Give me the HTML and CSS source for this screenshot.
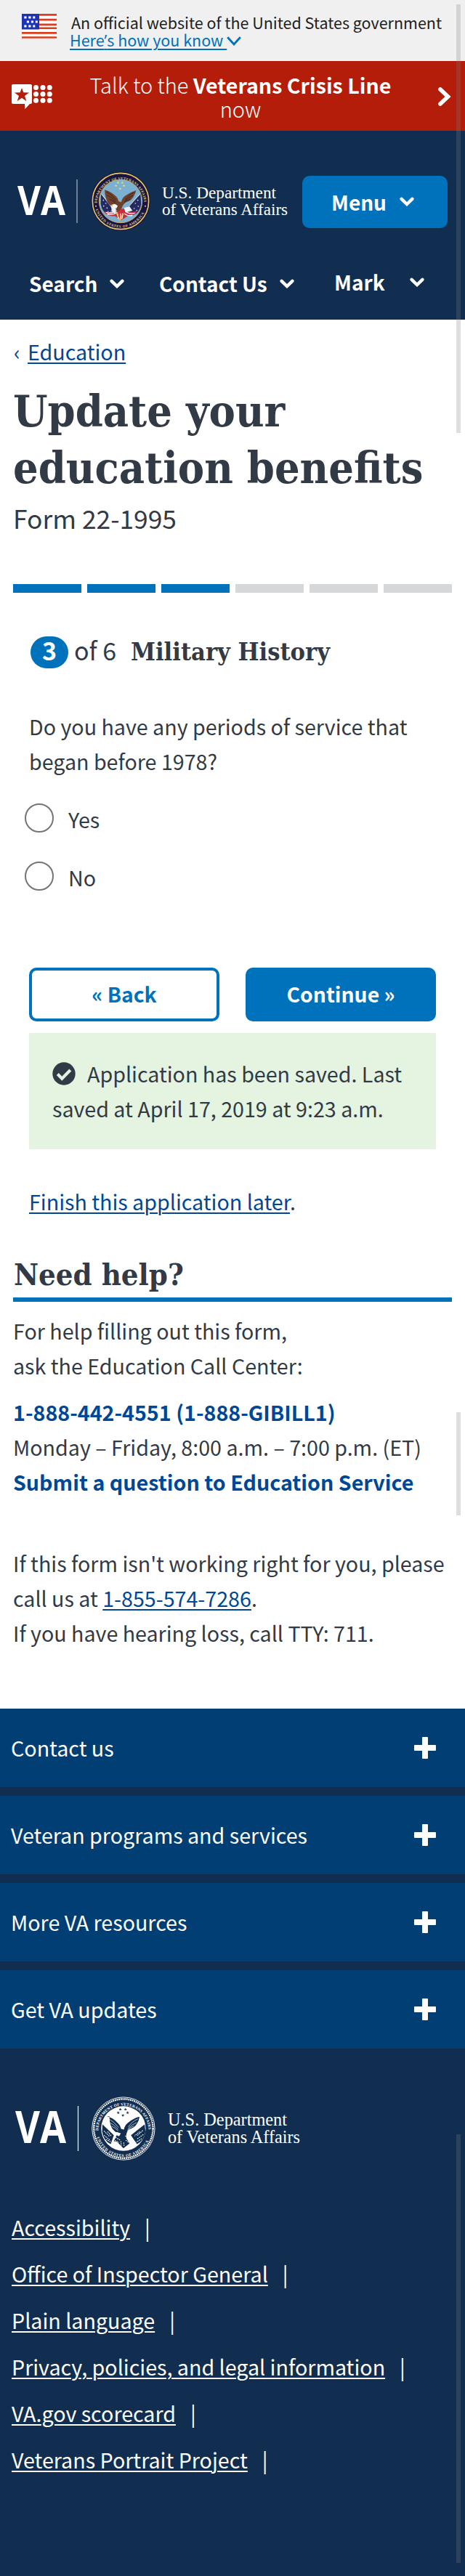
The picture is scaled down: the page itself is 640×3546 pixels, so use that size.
FILE: index.html
```html
<!DOCTYPE html>
<html lang="en">
<head>
<meta charset="utf-8">
<title>Update your education benefits</title>
<link rel="stylesheet" href="styles.css">
</head>
<body>
<svg class="defs" width="0" height="0" aria-hidden="true">
  <defs>
    <symbol id="chev" viewBox="0 0 20 13"><path d="M2.6 2.8 10 10 17.4 2.8" fill="none" stroke="#fff" stroke-width="4.4" stroke-linecap="round"/></symbol>
    <symbol id="plus" viewBox="0 0 30 30"><path d="M12 0h6q1 0 1 1v10h10q1 0 1 1v6q0 1-1 1H19v10q0 1-1 1h-6q-1 0-1-1V19H1q-1 0-1-1v-6q0-1 1-1h10V1q0-1 1-1z" fill="#fff"/></symbol>
    <path id="star" d="M0-6 1.6-1.9 6-1.9 2.5.8 3.8 5 0 2.5-3.8 5-2.5.8-6-1.9-1.6-1.9z"/>
    <path id="arc-top" d="M56 164A97 97 0 1 1 250 164"/>
    <path id="arc-bottom" d="M50 190A108 108 0 0 0 256 190"/>
  </defs>
</svg>

<div class="gov">
  <svg class="flag" width="48" height="34" viewBox="0 0 48 34">
    <path fill="#fff" d="M0 0h48v34H0z"/>
    <path stroke="#db3e1f" stroke-width="2.7" d="M0 1.4h48M0 8.2h48M0 14.9h48M0 19.9h48M0 26.3h48M0 32.5h48"/>
    <path fill="#fff" d="M24 21.3h24v1.6H0v-1.6z"/>
    <path fill="#1e33b1" d="M0 0h24v21.5H0z"/>
    <path stroke="#fff" stroke-width="3" stroke-dasharray="3.2 2.8" d="M3.3 5h15M6.8 11h15M3.3 17h15"/>
  </svg>
  <div class="gov-text">
    <div>An official website of the United States government</div>
    <div class="gov-more"><a>Here<span class="apos">’</span>s how you know&nbsp;</a><svg width="20" height="13" viewBox="0 0 20 13"><path d="M1.2 1.2 10 11 18.8 1.2" fill="none" stroke="#0071bb" stroke-width="2.8"/></svg></div>
  </div>
</div>

<div class="crisis">
  <svg class="crisis-icon" width="56" height="34" viewBox="0 0 56 34" fill="#fff">
    <path d="M2 0h24q2 0 2 2v23q0 2-2 2h-1l-6.500 7-.5-7H2q-2 0-2-2V2q0-2 2-2z"/>
    <path fill="#b31d09" d="m14 5 2.300 6.200 7.700.3-6 4.500 2.300 7.200L14 18.800l-6.300 4.400L10 16 4 11.500l7.700-.3z"/>
    <g><circle cx="33.500" cy="4.500" r="3.500"/><circle cx="43" cy="4.500" r="3.500"/><circle cx="52.300" cy="4.500" r="3.500"/><circle cx="33.500" cy="13.500" r="3.500"/><circle cx="43" cy="13.500" r="3.500"/><circle cx="52.300" cy="13.500" r="3.500"/><circle cx="33.500" cy="22.300" r="3.500"/><circle cx="43" cy="22.300" r="3.500"/><circle cx="52.300" cy="22.300" r="3.500"/></g>
  </svg>
  <div class="crisis-text"><span class="light">Talk to the</span> <b>Veterans Crisis Line</b><br><span class="light">now</span></div>
  <svg class="crisis-go" width="18" height="26" viewBox="0 0 18 26"><path d="M3 3 13.500 13 3 23" fill="none" stroke="#fff" stroke-width="5.600" stroke-linecap="round"/></svg>
</div>

<header class="top">
  <div class="top-row">
    <svg width="400" height="96" viewBox="0 230 400 96">
      <text class="va" x="24" y="296" font-size="56" textLength="66" lengthAdjust="spacingAndGlyphs">VA</text>
      <path d="M106 247v60" stroke="#8d9bb0" stroke-width="1.500"/>
      <g transform="translate(115 225) scale(.3333)">
        <circle cx="153" cy="156" r="122" fill="#191440"/>
        <circle cx="153" cy="156" r="116" fill="none" stroke="#e5c664" stroke-width="5"/>
        <circle cx="153" cy="156" r="89" fill="#7cb0d3" stroke="#c9ad5e" stroke-width="3"/>
        <g class="seal-text" fill="#e0d08c">
          <text><textPath href="#arc-top" textLength="300">DEPARTMENT OF VETERANS AFFAIRS</textPath></text>
          <text><textPath href="#arc-bottom" textLength="258">UNITED STATES OF AMERICA</textPath></text>
        </g>
        <circle cx="51" cy="176" r="3" fill="#e0d08c"/><circle cx="255" cy="176" r="3" fill="#e0d08c"/>
        <g fill="#f0dc59"><use href="#star" x="142" y="79"/><use href="#star" x="160" y="79"/><use href="#star" x="134" y="92"/><use href="#star" x="167" y="92"/><use href="#star" x="151" y="104"/></g>
        <path d="M72 127 118 186 104 214Q76 202 71 168z" fill="#252a62"/>
        <path d="M235 127 178 186 205 214Q233 202 238 168z" fill="#252a62"/>
        <path d="M74 126 125 188M232 126 180 186" stroke="#e8dfc0" stroke-width="3"/>
        <g fill="#e9e9f4"><circle cx="82" cy="152" r="2.500"/><circle cx="92" cy="165" r="2.500"/><circle cx="83" cy="176" r="2.500"/><circle cx="97" cy="184" r="2.500"/><circle cx="101" cy="199" r="2.500"/><circle cx="224" cy="152" r="2.500"/><circle cx="214" cy="165" r="2.500"/><circle cx="226" cy="177" r="2.500"/><circle cx="209" cy="186" r="2.500"/><circle cx="220" cy="194" r="2.500"/></g>
        <path d="M83 199q30 6 55-10l30-2q20 20 53 9-8 22-36 19l-29 20-28-18q-30 3-45-18z" fill="#c82d40"/>
        <path d="M92 202q24 8 45-7M98 210q22 4 42-8M172 197q18 14 40 8M168 207q16 12 34 7M140 207l4 22M152 206v27M163 206l-5 24" fill="none" stroke="#fff" stroke-width="4"/>
        <path d="M112 174 134 184 132 207 119 201zM167 183 190 178 202 195 173 202z" fill="#eef3f8"/>
        <path d="M87 109q24 6 47 27 8 7 11 21l11 3q2-16 15-26 21-15 46-23-2 13-11 27-9 16-29 21-14 8-20 27l-18 15-9-23q-24-3-31-18-10-17-12-51z" fill="#70422c"/>
        <path d="M94 117q25 12 40 34M98 131q20 8 35 28M107 147q14 6 26 18M211 119q-27 11-39 31M204 132q-22 9-34 25M194 146q-15 5-26 17" fill="none" stroke="#3c241d" stroke-width="3"/>
        <path d="m115 171 14-4 12 8-5 10-12-4z" fill="#fff"/><path d="m112 173 8-2-4 7z" fill="#f0c443"/>
        <path d="m135 203 15 31 12-26" fill="none" stroke="#e9bf51" stroke-width="4"/>
      </g>
      <text class="dept" x="223" y="273" font-size="23.500" textLength="157" lengthAdjust="spacingAndGlyphs">U.S. Department</text>
      <text class="dept" x="223" y="296" font-size="23.500" textLength="173" lengthAdjust="spacingAndGlyphs">of Veterans Affairs</text>
    </svg>
    <div class="menu">Menu<svg width="20" height="13"><use href="#chev"/></svg></div>
  </div>
  <nav class="nav">
    <div class="n1">Search<svg width="20" height="13"><use href="#chev"/></svg></div>
    <div class="n2">Contact Us<svg width="20" height="13"><use href="#chev"/></svg></div>
    <div class="n3">Mark<svg width="20" height="13"><use href="#chev"/></svg></div>
  </nav>
</header>

<main>
  <div class="crumb"><span>‹</span><a>Education</a></div>
  <h1>Update your<br>education benefits</h1>
  <div class="form-no">Form 22-1995</div>
  <div class="progress"><i class="on"></i><i class="on"></i><i class="on"></i><i></i><i></i><i></i></div>
  <section class="step">
    <div class="step-head"><span class="badge">3</span><span class="of">of 6</span><h2>Military History</h2></div>
    <p class="question">Do you have any periods of service that<br>began before 1978?</p>
    <label class="radio"><i></i>Yes</label>
    <label class="radio"><i></i>No</label>
    <div class="buttons"><div class="btn back">« Back</div><div class="btn">Continue »</div></div>
    <div class="alert"><svg width="32" height="32" viewBox="0 0 32 32"><circle cx="16" cy="16" r="15.700" fill="#323a45"/><path d="m7.300 16.500 6 6.200L24.800 11" fill="none" stroke="#e5f3e1" stroke-width="4.200"/></svg>Application has been saved. Last<br>saved at April 17, 2019 at 9:23 a.m.</div>
    <p class="finish"><a>Finish this application later</a>.</p>
  </section>
  <section class="help">
    <h2>Need help?</h2>
    <p class="p1">For help filling out this form,<br>ask the Education Call Center:</p>
    <p class="p2"><b>1-888-442-4551 (1-888-GIBILL1)</b><br>Monday – Friday, 8:00 a.m. – 7:00 p.m. (ET)<br><b>Submit a question to Education Service</b></p>
    <p class="p3">If this form isn't working right for you, please<br>call us at <a>1-855-574-7286</a>.<br>If you have hearing loss, call TTY: 711.</p>
  </section>
</main>

<footer>
  <div class="rows">
    <div class="row">Contact us<svg width="30" height="30"><use href="#plus"/></svg></div>
    <div class="row">Veteran programs and services<svg width="30" height="30"><use href="#plus"/></svg></div>
    <div class="row">More VA resources<svg width="30" height="30"><use href="#plus"/></svg></div>
    <div class="row">Get VA updates<svg width="30" height="30"><use href="#plus"/></svg></div>
  </div>
  <svg class="foot-logo" width="430" height="96" viewBox="0 2882 430 96">
    <text class="va" x="21" y="2950" font-size="60" textLength="70" lengthAdjust="spacingAndGlyphs">VA</text>
    <path d="M107.500 2899v62" stroke="#e3e7ec" stroke-width="1.300"/>
    <g transform="translate(115.300 2874.400) scale(.3567)">
      <circle cx="153" cy="156" r="121" fill="none" stroke="#fff" stroke-width="2.500"/>
      <circle cx="153" cy="156" r="114" fill="none" stroke="#fff" stroke-width="7" stroke-dasharray="5 2.500"/>
      <circle cx="153" cy="156" r="86" fill="#fff"/>
      <g class="seal-text" fill="#fff">
        <text><textPath href="#arc-top" textLength="300">DEPARTMENT OF VETERANS AFFAIRS</textPath></text>
        <text><textPath href="#arc-bottom" textLength="258">UNITED STATES OF AMERICA</textPath></text>
      </g>
      <g fill="#112e51">
        <use href="#star" x="141" y="82"/><use href="#star" x="161" y="82"/><use href="#star" x="133" y="95"/><use href="#star" x="169" y="95"/><use href="#star" x="151" y="105"/>
        <path d="M72 140 116 182 104 216Q76 204 71 168z"/><path d="M235 140 182 182 205 216Q233 204 238 168z"/>
        <path d="M89 109q22 4 44 27 8 7 11 21l11 3q2-16 15-26 21-18 45-24-1 13-10 28-9 16-29 21-14 8-12 34l13 20-24 19-24-24-13-3 15-32q-17-6-22-18-10-17-10-46z"/>
      </g>
      <path d="M96 118q22 12 38 34M98 132q18 8 35 27M107 147q14 6 26 18M209 119q-25 11-37 31M204 133q-20 8-34 24M194 146q-15 5-26 17" fill="none" stroke="#fff" stroke-width="1.800"/>
      <path d="M78 130 128 180M228 130 180 174" stroke="#fff" stroke-width="7"/>
      <path d="M78 165l22 22M78 182l22 18M92 168l15 18M85 198l20 10M228 163l-22 21M230 179l-25 18M216 168l-20 17M224 195l-22 14M122 190l18 10M120 202l16 8M160 184l22 19M162 201l18 13M143 205l2 18M154 210l2 16" stroke="#fff" stroke-width="3" stroke-dasharray="5 3"/>
      <path d="m114 176 13-7 16 6-7 11-10-5z" fill="#fff"/>
    </g>
    <text class="dept" x="231" y="2926" font-size="24.500" textLength="164" lengthAdjust="spacingAndGlyphs">U.S. Department</text>
    <text class="dept" x="231" y="2950" font-size="24.500" textLength="182" lengthAdjust="spacingAndGlyphs">of Veterans Affairs</text>
  </svg>
  <ul class="links">
    <li><a>Accessibility</a><span>|</span></li>
    <li><a>Office of Inspector General</a><span>|</span></li>
    <li><a>Plain language</a><span>|</span></li>
    <li><a>Privacy, policies, and legal information</a><span>|</span></li>
    <li><a>VA.gov scorecard</a><span>|</span></li>
    <li><a>Veterans Portrait Project</a><span>|</span></li>
  </ul>
</footer>
<div class="thumb t1"></div><div class="thumb t2"></div><div class="thumb t3"></div>
</body>
</html>
```
FILE: styles.css
```css
* { box-sizing: border-box; }
body {
  position: relative;
  margin: 0;
  width: 640px;
  height: 3546px;
  background: #fff;
  color: #323a45;
  font: 400 28.65px/48px "Noto Sans CJK SC", "Noto Sans", sans-serif;
  white-space: nowrap;
}
svg { display: block; flex: none; }
.defs { position: absolute; }
p, h1, h2, ul { margin: 0; padding: 0; }
a { text-decoration: underline; text-decoration-thickness: 2px; text-underline-offset: 3px; color: #004795; }

/* government banner */
.gov { display: flex; height: 84px; padding: 19px 0 0 30px; background: #f0f0f0; color: #212121; font-size: 21.5px; line-height: 24px; }
.gov-text { margin-left: 20px; }
.gov-more { display: flex; margin-left: -2px; }
.gov-more a { color: #0071bb; }
.gov-more svg { margin-top: 7px; }
.apos { font-family: "Open Sans", sans-serif; }

/* crisis line */
.crisis { display: flex; height: 96px; padding: 16px 0 0 16px; background: #b31d09; color: #fff; font-size: 28.6px; line-height: 32px; }
.crisis-icon { margin-top: 16px; }
.crisis-text { width: 518px; text-align: center; }
.crisis .light { font-size: 29px; font-weight: 300; }
.crisis-go { margin: 20px 0 0 13px; }

/* header */
.top { height: 260px; padding-top: 50px; background: #112e51; color: #fff; font-size: 28px; font-weight: 700; }
.top-row { display: flex; align-items: center; height: 96px; }
.va { font-family: "Open Sans", sans-serif; font-weight: 700; fill: #fff; }
.dept { font-family: "Liberation Serif", serif; font-weight: 400; fill: #fff; }
.seal-text { font: 700 15px "Liberation Serif", serif; }
.menu { display: flex; width: 200px; height: 72px; margin-left: 16px; padding: 12px 0 0 40px; border-radius: 10px; background: #0071bb; line-height: 48px; }
.menu svg { margin: 17px 0 0 18px; }
.nav { display: flex; padding: 40px 0 0 40px; }
.nav div { display: flex; line-height: 48px; }
.nav svg { margin: 18px 0 0 17px; }
.n1 { width: 179px; }
.n2 { width: 241px; }
.nav .n3 { height: 44px; line-height: 44px; }
.nav .n3 svg { margin: 16px 0 0 34px; }

/* form */
main { height: 1912px; padding: 20px 18px 0; }
.crumb { display: flex; padding-left: 1px; color: #004795; }
.crumb span { width: 19px; }
h1, h2 { font-family: "DejaVu Serif Condensed", "DejaVu Serif", serif; font-weight: 700; }
h1 { margin: 19px 0 0; font-size: 60.6px; line-height: 78px; }
.form-no { margin: 6px 0 0; font-size: 35.4px; }
.progress { display: grid; grid-template-columns: repeat(6, 1fr); gap: 8px; margin-top: 67px; }
.progress i { height: 12px; background: #d6d7d9; }
.progress .on { background: #0071bb; }
.step { padding: 60px 22px 0; }
.step-head { display: flex; align-items: baseline; height: 44px; padding-left: 2px; line-height: 38px; }
.badge { width: 52px; height: 44px; border-radius: 24px; background: #0071bb; color: #fff; text-align: center; font-size: 34px; font-weight: 700; }
.of { margin-left: 8px; width: 78px; font-size: 34px; }
.step-head h2 { font-size: 34.1px; }
.question { margin-top: 56px; margin-bottom: 31px; }
.radio { display: flex; height: 48px; margin-bottom: 32px; padding: 1px 0 0 54px; position: relative; }
.radio i { position: absolute; left: -6px; top: 3px; width: 40px; height: 40px; border: 2px solid #757575; border-radius: 50%; }
.buttons { display: grid; grid-template-columns: 1fr 1fr; gap: 36px; margin-top: 101px; }
.btn { height: 74px; padding-top: 12px; border-radius: 10px; background: #0071bb; color: #fff; font-size: 28.3px; font-weight: 700; text-align: center; }
.back { padding-top: 8px; border: 4px solid #0071bb; background: #fff; color: #0071bb; }
.alert { height: 160px; margin-top: 16px; padding: 32px 32px 0; background: #e5f3e1; }
.alert svg { display: inline-block; vertical-align: -4px; margin-right: 16px; }
.finish { margin: 48px 0 0; }

/* help */
.help h2 { height: 62px; margin-top: 52px; padding-left: 1px; border-bottom: 6px solid #0071bb; font-size: 41.5px; line-height: 50px; }
.help b { color: #004795; }
.p1 { margin-top: 16px; }
.p2 { margin-top: 16px; }
.p3 { margin-top: 64px; }

/* footer */
footer { height: 1194px; background: #112e51; color: #fff; }
.rows { display: grid; gap: 12px; }
.row { display: flex; align-items: center; justify-content: space-between; height: 108px; padding: 0 40px 0 15px; background: #003e73; }
.foot-logo { margin-top: 62px; }
.links { margin-top: 64px; padding-left: 16px; list-style: none; }
.links li { display: flex; height: 64px; }
.links a { color: #fff; }
.links span { margin-left: 20px; }

/* scroll thumbs */
.thumb { position: absolute; left: 628px; width: 6px; background: rgba(127, 127, 127, .26); }
.t1 { top: 6px; height: 590px; }
.t2 { top: 1944px; height: 142px; }
.t3 { top: 2938px; height: 590px; }
```
